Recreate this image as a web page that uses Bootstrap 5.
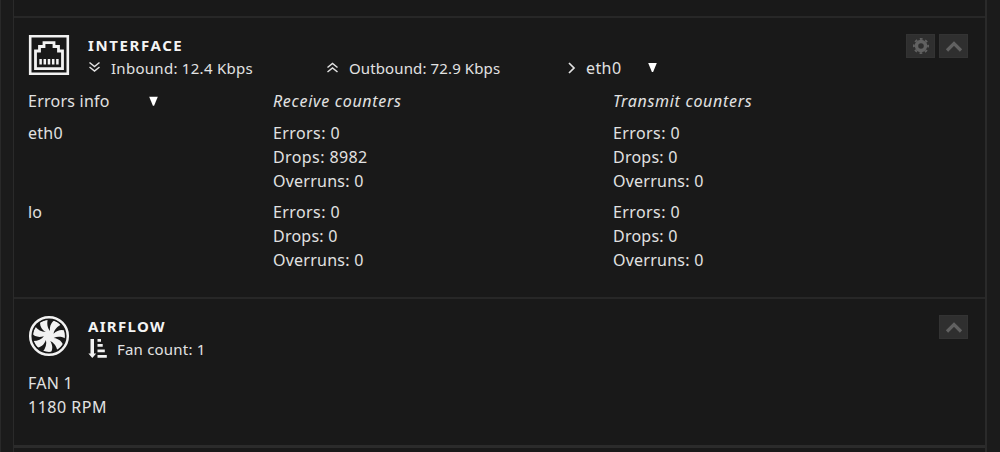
<!DOCTYPE html>
<html lang="en">
<head>
    <meta charset="UTF-8">
    <meta name="viewport" content="width=device-width, initial-scale=1.0">
    <title>Dashboard</title>
    <link href="https://cdn.jsdelivr.net/npm/bootstrap@5.3.0/dist/css/bootstrap.min.css" rel="stylesheet">
    <style>
        body {
            background-color: #1b1b1b;
            color: #e2e2e2;
            font-family: "Noto Sans", "Open Sans", sans-serif;
            font-size: 16px;
            line-height: 24px;
            letter-spacing: 0.24px;
            height: 452px;
            border-left: 1px solid #292929;
        }
        .panel {
            width: 974px;
            height: 452px;
            margin-left: 12px;
            background-color: #191919;
            border: solid #2a2a2a;
            border-width: 0 2px 0 1px;
        }
        .tile {
            border-bottom: 2px solid #272727;
            padding: 0 17px 0 14px;
        }
        .tile-prev {
            height: 18px;
        }
        .tile-interface {
            height: 281px;
            padding-top: 16px;
        }
        .tile-airflow {
            height: 149px;
            padding-top: 16px;
            border-bottom-width: 3px;
            border-bottom-color: #2b2b2b;
        }
        .tile-head {
            height: 55px;
        }
        .tile-airflow .tile-head {
            height: 56px;
        }
        .tile-icon {
            width: 42px;
            height: 42px;
            margin-right: 18px;
        }
        .tile-title {
            font-size: 15px;
            font-weight: 700;
            line-height: 23px;
            letter-spacing: 1.6px;
            color: #f4f4f4;
            margin: 0;
        }
        .tile-airflow .tile-title {
            letter-spacing: 1.3px;
        }
        .tile-info {
            font-size: 15px;
            line-height: 22px;
        }
        .info-in {
            width: 238px;
        }
        .info-out {
            width: 241px;
        }
        .txt-in {
            letter-spacing: 0.28px;
        }
        .txt-out {
            letter-spacing: 0.12px;
        }
        .txt-fan {
            letter-spacing: 0.2px;
            margin-left: -1px;
        }
        .sel-eth {
            width: 62px;
            font-size: 16px;
            letter-spacing: 0.4px;
        }
        .tile-btn {
            width: 29px;
            height: 24px;
            background-color: #2f2f2f;
            border: 1px solid #333;
            border-radius: 0;
            color: #616161;
        }
        .counters {
            display: grid;
            grid-template-columns: 245px 340px 1fr;
            row-gap: 7.5px;
        }
        .counters em {
            letter-spacing: 0.7px;
        }
        .txt-errors,
        .txt-drops {
            letter-spacing: 0.4px;
        }
        .info-sel {
            width: 130px;
        }
        .fan-rpm {
            letter-spacing: 0.5px;
        }
        svg {
            display: block;
            flex: none;
        }
    </style>
</head>
<body class="overflow-hidden">
    <main class="panel">
        <div class="tile tile-prev"></div>

        <section class="tile tile-interface">
            <div class="tile-head d-flex align-items-start">
                <svg class="tile-icon" viewBox="0 0 42 42" fill="none" stroke="#f2f2f2">
                    <path d="M2.200 2.200H39.800V39.800H2.200Z" stroke-width="2.600"/>
                    <path d="M7.500 34.700V17H11.500V12.500H16V8.700H26V12.500H30.500V17H34.500V34.700Z" stroke-width="2.800"/>
                    <path d="M12.600 25v5.500M16.800 25v5.500M21 25v5.500M25.200 25v5.500M29.400 25v5.500" stroke-width="2.500"/>
                </svg>
                <div class="flex-grow-1">
                    <h2 class="tile-title">INTERFACE</h2>
                    <div class="tile-info d-flex">
                        <div class="info-in d-flex">
                            <svg class="mt-1 me-2" width="15" height="14" viewBox="0 0 15 14" fill="none" stroke="currentColor" stroke-width="1.500"><path d="M1.500 1.500l5 4 5-4M1.500 6l5 4 5-4"/></svg>
                            <span class="txt-in">Inbound: 12.4 Kbps</span>
                        </div>
                        <div class="info-out d-flex">
                            <svg class="mt-1 me-2" width="15" height="14" viewBox="0 0 15 14" fill="none" stroke="currentColor" stroke-width="1.500"><path d="M1.500 6.500l5-4 5 4M1.500 11l5-4 5 4"/></svg>
                            <span class="txt-out">Outbound: 72.9 Kbps</span>
                        </div>
                        <div class="d-flex">
                            <svg class="mt-1" width="19" height="14" viewBox="0 0 19 14" fill="none" stroke="currentColor" stroke-width="1.700"><path d="M2 2l5 5-5 5"/></svg>
                            <span class="sel-eth">eth0</span>
                            <svg class="mt-1" width="9" height="14" viewBox="0 0 9 14"><path d="M.2 2h8.600l-3.700 9h-1.200z" fill="#fff"/></svg>
                        </div>
                    </div>
                </div>
                <div class="d-flex gap-1">
                    <button type="button" class="btn tile-btn p-0 d-flex align-items-center justify-content-center" aria-label="Settings">
                        <svg width="16" height="16" viewBox="0 0 16 16"><circle cx="8" cy="8" r="4.500" fill="none" stroke="currentColor" stroke-width="3.400"/><circle cx="8" cy="8" r="7.100" fill="none" stroke="currentColor" stroke-width="1.800" stroke-dasharray="2.800 2.776" stroke-dashoffset="1.400"/></svg>
                    </button>
                    <button type="button" class="btn tile-btn p-0 d-flex align-items-center justify-content-center" aria-label="Collapse">
                        <svg width="18" height="12" viewBox="0 0 18 12"><path d="M2 10.500L9 3.500l7 7" fill="none" stroke="currentColor" stroke-width="3.200"/></svg>
                    </button>
                </div>
            </div>
            <div class="counters">
                <div class="info-sel d-flex">
                    <span>Errors info</span>
                    <svg class="ms-auto mt-1" width="9" height="16" viewBox="0 0 9 16"><path d="M.2 3.700h8.600l-3.700 9h-1.200z" fill="#fff"/></svg>
                </div>
                <em>Receive counters</em>
                <em>Transmit counters</em>

                <div>eth0</div>
                <div><span class="txt-errors">Errors: 0</span><br><span class="txt-drops">Drops: 8982</span><br>Overruns: 0</div>
                <div><span class="txt-errors">Errors: 0</span><br>Drops: 0<br>Overruns: 0</div>

                <div>lo</div>
                <div><span class="txt-errors">Errors: 0</span><br>Drops: 0<br>Overruns: 0</div>
                <div><span class="txt-errors">Errors: 0</span><br>Drops: 0<br>Overruns: 0</div>
            </div>
        </section>

        <section class="tile tile-airflow">
            <div class="tile-head d-flex align-items-start">
                <svg class="tile-icon" viewBox="-21 -21 42 42">
                    <defs>
                        <!-- dark gap between two blades -->
                        <path id="gap" d="M1-5C-1.500-8-2.500-12.500-1-17.500L6.500-16.500C2.500-14 .5-10.500 1-5Z"/>
                    </defs>
                    <circle r="16.300" fill="#f2f2f2"/>
                    <circle r="16.700" fill="none" stroke="#191919" stroke-width="1.600"/>
                    <g fill="#191919">
                        <use href="#gap"/>
                        <use href="#gap" transform="rotate(51.430)"/>
                        <use href="#gap" transform="rotate(102.860)"/>
                        <use href="#gap" transform="rotate(154.290)"/>
                        <use href="#gap" transform="rotate(205.710)"/>
                        <use href="#gap" transform="rotate(257.140)"/>
                        <use href="#gap" transform="rotate(308.570)"/>
                    </g>
                    <circle r="18.800" fill="none" stroke="#f2f2f2" stroke-width="2.500"/>
                </svg>
                <div class="flex-grow-1">
                    <h2 class="tile-title">AIRFLOW</h2>
                    <div class="tile-info d-flex">
                        <svg width="30" height="22" viewBox="0 0 30 22" fill="#f2f2f2"><path d="M2.500 1h3.500v14.500h2.200L4.300 20 .4 15.500h2.100zM9.500 1h3.500v2.800h-3.500zM9.500 6h5.200v2.800h-5.200zM9.500 11.500h7.300v2.800H9.500zM9.500 17h9.300v2.800H9.500z"/></svg>
                        <span class="txt-fan">Fan count: 1</span>
                    </div>
                </div>
                <button type="button" class="btn tile-btn p-0 d-flex align-items-center justify-content-center" aria-label="Collapse">
                    <svg width="18" height="12" viewBox="0 0 18 12"><path d="M2 10.500L9 3.500l7 7" fill="none" stroke="currentColor" stroke-width="3.200"/></svg>
                </button>
            </div>
            <div>FAN 1<br><span class="fan-rpm">1180 RPM</span></div>
        </section>
    </main>
    <script src="https://cdn.jsdelivr.net/npm/bootstrap@5.3.0/dist/js/bootstrap.bundle.min.js"></script>
</body>
</html>
